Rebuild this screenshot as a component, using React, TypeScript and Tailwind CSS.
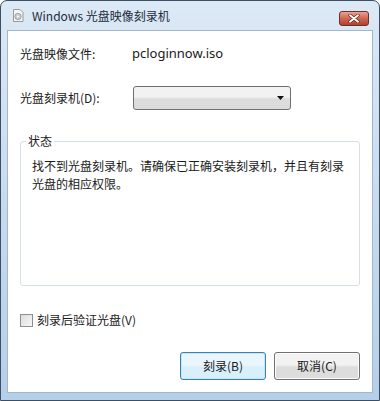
import React from 'react'

const font = { fontFamily: '"Noto Sans CJK SC", "Noto Sans", sans-serif' }

function DiscIcon() {
  return (
    <svg width="12" height="13" viewBox="0 0 12 13">
      <path d="M1.5 0.5h6.5l3 3v9h-9.5z" fill="#f4f4f4" stroke="#9a9a9a" />
      <circle cx="6" cy="7.5" r="3.2" fill="#c9ccd0" stroke="#8e9296" strokeWidth="0.7" />
      <circle cx="6" cy="7.5" r="0.9" fill="#fff" />
    </svg>
  )
}

export default function App() {
  return (
    <div className="h-[401px] w-[380px] bg-white" style={font}>
      <div className="flex h-[401px] w-[380px] flex-col rounded-t-[7px] border border-[#3d4f63] bg-gradient-to-b from-[#dce9f6] via-[#c7dbf0] to-[#b6cfe9]">
        {/* title bar */}
        <div className="flex h-[29px] items-center pl-[11px] pr-[10px]">
          <DiscIcon />
          <span className="ml-[8px] text-[12px] leading-none text-[#1e2c3c]">Windows 光盘映像刻录机</span>
          <button
            type="button"
            className="ml-auto mt-[5px] flex h-[15px] w-[30px] items-center justify-center rounded-[3px] border border-[#6e2f28] bg-gradient-to-b from-[#e8a292] via-[#d06552] to-[#b2402e]"
          >
            <svg width="12" height="9" viewBox="0 0 12 9">
              <path d="M2 1.2L10 7.8M10 1.2L2 7.8" stroke="#5a2a22" strokeWidth="3.2" strokeLinecap="round" />
              <path d="M2 1.2L10 7.8M10 1.2L2 7.8" stroke="#fff" strokeWidth="1.8" strokeLinecap="round" />
            </svg>
          </button>
        </div>

        {/* client area */}
        <div className="mx-[6px] flex h-[363px] flex-col border border-[#a3b7cc] bg-white px-[12px] text-[12px] text-[#1a1a1a]">
          <div className="mt-[14px] flex h-[18px] items-center">
            <span className="w-[112px]">光盘映像文件:</span>
            <span style={{ fontFamily: '"Noto Sans", sans-serif' }} className="text-[13px]">pcloginnow.iso</span>
          </div>

          <div className="mt-[23px] flex items-center">
            <span className="w-[113px]">光盘刻录机(D):</span>
            <div className="flex h-[24px] w-[158px] items-center justify-end rounded-[3px] border border-[#707070] bg-gradient-to-b from-[#f2f2f2] from-45% to-[#dcdcdc] to-55% pr-[6px]">
              <svg width="7" height="4" viewBox="0 0 7 4">
                <path d="M0 0h7L3.5 4z" fill="#111" />
              </svg>
            </div>
          </div>

          {/* group box */}
          <div className="relative mt-[31px] h-[145px] rounded-[3px] border border-[#d5dfe5]">
            <span className="absolute -top-[9px] left-[5px] bg-white px-[2px] leading-[16px]">状态</span>
            <p className="mt-[15px] pl-[11px] pr-[8px] leading-[18px]">
              找不到光盘刻录机。请确保已正确安装刻录机，并且有刻录光盘的相应权限。
            </p>
          </div>

          <div className="mt-[25px] flex items-center">
            <span className="h-[13px] w-[13px] border border-[#8e8f8f] bg-gradient-to-br from-[#dcdcdc] to-[#f8f8f8]" />
            <span className="ml-[4px]">刻录后验证光盘(V)</span>
          </div>

          <div className="mt-[23px] flex justify-end gap-[8px]">
            <button
              type="button"
              className="h-[28px] w-[86px] rounded-[3px] border border-[#3c7fb1] bg-gradient-to-b from-[#eaf6fd] from-45% to-[#d9f0fc] to-55% text-[12px] text-[#1a1a1a] shadow-[inset_0_0_0_1px_#c6e7fa]"
            >
              刻录(B)
            </button>
            <button
              type="button"
              className="h-[28px] w-[86px] rounded-[3px] border border-[#707070] bg-gradient-to-b from-[#f2f2f2] from-45% to-[#dddddd] to-55% text-[12px] text-[#1a1a1a] shadow-[inset_0_0_0_1px_#fcfcfc]"
            >
              取消(C)
            </button>
          </div>
        </div>
      </div>
    </div>
  )
}
